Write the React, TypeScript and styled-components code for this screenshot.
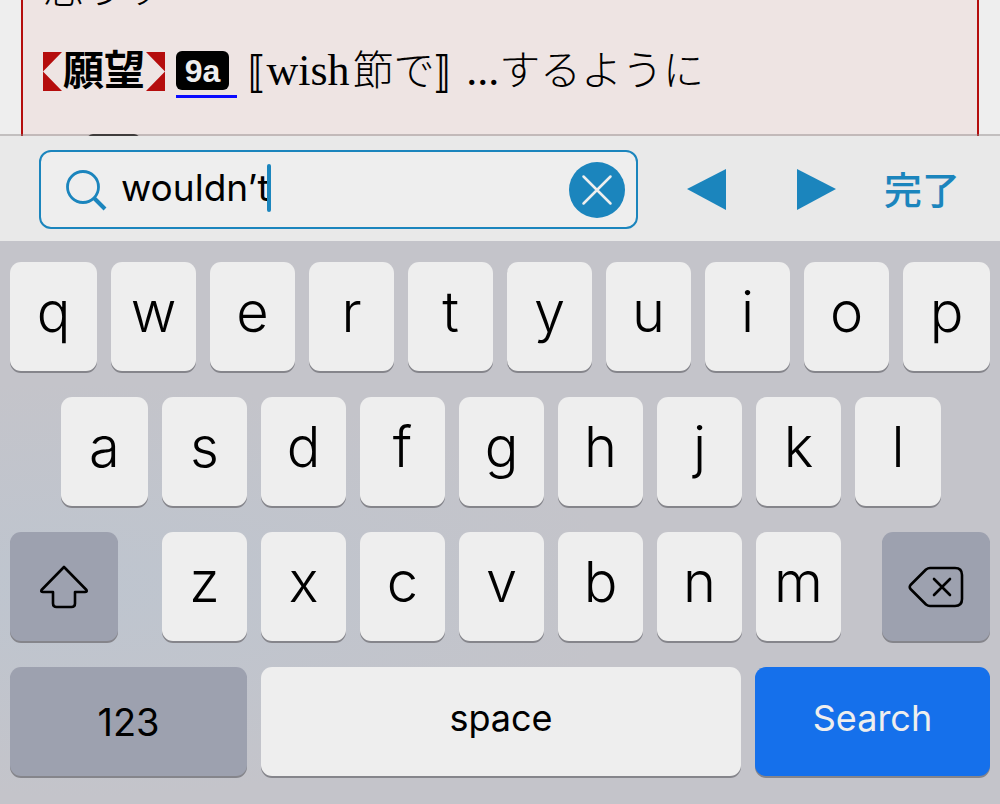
import React, { useState } from 'react';
import styled, { createGlobalStyle } from 'styled-components';

const accent = '#1b85bd';
const sans = 'Inter, "Noto Sans CJK JP", sans-serif';

const GlobalStyle = createGlobalStyle`
  *, *::before, *::after { box-sizing: border-box; }
  body { margin: 0; background: #eeeeee; }
  button { border: 0; padding: 0; background: none; font: inherit; cursor: pointer; }
`;

const Screen = styled.div`
  display: flex;
  flex-direction: column;
  height: 100vh;
  font-family: ${sans};
  color: #000;
`;

const Reader = styled.main`
  flex: 1 1 0;
  min-height: 0;
  overflow: hidden;
  padding: 0 21px;
  background: #eeeeee;
`;

const Entry = styled.article`
  display: flex;
  flex-direction: column;
  justify-content: center;
  height: 100%;
  padding: 6px 20px 0;
  border: solid #b50d0d;
  border-width: 0 2px;
  background: #eee4e3;
  font-family: "Liberation Serif", "Noto Sans CJK JP", serif;
  font-size: 41px;
  font-weight: 300;
  line-height: 82px;
  white-space: nowrap;
`;

const Line = styled.p<{ $indent?: number }>`
  display: flex;
  flex: none;
  align-items: center;
  height: 82px;
  margin: 0;
  padding-left: ${({ $indent = 0 }) => $indent}px;
`;

const Label = styled.strong`
  display: flex;
  align-items: center;
  margin-right: 11px;
  font-weight: 700;
`;

const Corner = styled.svg`
  width: 20px;
  height: 39px;
  fill: #b50d0d;
`;

const SenseLink = styled.a`
  display: flex;
  height: 47px;
  margin: 6px 6px 0 0;
  padding-right: 8px;
  border-bottom: 3px solid #0a0aff;
  text-decoration: none;
`;

const Badge = styled.span`
  width: 53px;
  height: 39px;
  border-radius: 6px;
  background: #000;
  color: #eee;
  font: 700 32px/41px "Liberation Sans", sans-serif;
  text-align: center;
`;

const Bracket = styled.span`
  font-family: "Noto Sans CJK JP", sans-serif;
  font-weight: 400;
  font-feature-settings: "halt";
`;

const Latin = styled.span<{ $gap?: number }>`
  padding: 0 ${({ $gap = 0 }) => $gap}px;
  font-size: 44px;
`;

const FindBar = styled.form`
  display: flex;
  flex: none;
  align-items: center;
  height: 107px;
  margin-top: -2px;
  padding: 2px 40px 0 39px;
  border-top: 2px solid #8c868673;
  background: #e9e9e9;
  background-clip: padding-box;
  color: ${accent};
`;

const SearchField = styled.div`
  display: flex;
  flex: 1;
  align-items: center;
  height: 79px;
  padding: 0 11px 0 24px;
  border: 2px solid ${accent};
  border-radius: 12px;
  background: #eeeeee;
`;

const SearchInputWrap = styled.label`
  position: relative;
  display: flex;
  flex: 1;
  min-width: 0;
  margin: 0 0 4px 12px;
`;

const SearchInput = styled.input`
  width: 100%;
  height: 60px;
  padding: 0;
  border: 0;
  outline: 0;
  background: transparent;
  color: #000;
  font: 400 37px/60px ${sans};
`;

const CaretTrack = styled.span`
  position: absolute;
  inset: 0;
  display: flex;
  align-items: center;
  pointer-events: none;
  font: 400 37px/60px ${sans};
`;

const Ghost = styled.span`
  margin-right: -3px;
  visibility: hidden;
`;

const Caret = styled.span`
  width: 4px;
  height: 48px;
  border-radius: 2px;
  background: ${accent};
`;

const IconButton = styled.button`
  display: flex;
  flex: none;
  color: inherit;
`;

const Steps = styled.div`
  display: flex;
  gap: 71px;
  margin: 0 48px 0 49px;
`;

const DoneButton = styled.button`
  flex: none;
  padding-bottom: 4px;
  color: inherit;
  font: 500 38px/56px "Noto Sans CJK JP", sans-serif;
`;

const Keyboard = styled.section`
  display: flex;
  flex: none;
  flex-direction: column;
  gap: 26px;
  padding: 21px 10px 28px;
  background:
    radial-gradient(ellipse at 8% 62%, #bec5cf 0%, #bec5cf00 42%),
    #c4c4ca;
`;

const KeyRow = styled.div<{ $left?: number; $right?: number }>`
  display: flex;
  gap: 14px;
  padding: 0 ${({ $right = 0 }) => $right}px 0 ${({ $left = 0 }) => $left}px;
`;

type Tone = 'light' | 'dark' | 'primary';
const tones: Record<Tone, string> = {
  light: 'background: #eeeeee; color: #000;',
  dark: 'background: #9da1af; color: #000;',
  primary: 'background: #1570eb; color: #eee;',
};

const Key = styled.button<{ $grow?: number; $tone?: Tone }>`
  display: flex;
  flex: ${({ $grow = 85 }) => $grow} 1 0;
  align-items: center;
  justify-content: center;
  min-width: 0;
  height: 109px;
  border-radius: 11px;
  box-shadow: 0 2px 0 #85858b;
  font-size: 38px;
  ${({ $tone = 'light' }) => tones[$tone]}
`;

const LetterKey = styled(Key)`
  padding-bottom: 10px;
  font-size: 56px;
  font-weight: 300;
`;

const WordKey = styled(Key)`
  padding-bottom: 8px;
  font-size: 36px;
`;

const Letters = styled.div`
  display: flex;
  flex: 679 1 0;
  gap: 14px;
  margin: 0 27px 0 30px;
`;

const widths: Record<string, number> = { q: 87, p: 87, a: 87, l: 86 };

function LetterKeys({ letters, onType }: { letters: string; onType: (c: string) => void }) {
  return (
    <>
      {letters.split('').map((c) => (
        <LetterKey key={c} type="button" $grow={widths[c]} onClick={() => onType(c)}>
          {c}
        </LetterKey>
      ))}
    </>
  );
}

function LabelMark({ children }: { children: React.ReactNode }) {
  return (
    <Label>
      <Corner viewBox="0 0 20 39" aria-hidden="true">
        <path d="M0 0H19L0 19.5L19 39H0Z" />
      </Corner>
      {children}
      <Corner viewBox="0 0 20 39" aria-hidden="true">
        <path d="M20 0H1L20 19.5L1 39H20Z" />
      </Corner>
    </Label>
  );
}

export default function App() {
  const [query, setQuery] = useState('wouldn’t');
  const type = (c: string) => setQuery((q) => q + c);

  return (
    <Screen>
      <GlobalStyle />
      <Reader>
        <Entry lang="ja">
          <Line>思うす</Line>
          <Line>
            <LabelMark>願望</LabelMark>
            <SenseLink href="#9a">
              <Badge>9a</Badge>
            </SenseLink>
            <Bracket>〚</Bracket>
            <Latin $gap={3}>wish</Latin>節で<Bracket>〛</Bracket>
            <Latin>&nbsp;...</Latin>するように
          </Line>
          <Line $indent={44}>
            <Badge aria-hidden="true" />
          </Line>
        </Entry>
      </Reader>

      <FindBar onSubmit={(e) => e.preventDefault()}>
        <SearchField>
          <svg width="44" height="44" viewBox="0 0 44 44" fill="none" stroke={accent} aria-hidden="true">
            <circle cx="18" cy="19" r="15.5" strokeWidth="2.8" />
            <path d="M29 30L40 41" strokeWidth="4" />
          </svg>
          <SearchInputWrap>
            <SearchInput aria-label="Find" value={query} onChange={(e) => setQuery(e.target.value)} />
            <CaretTrack aria-hidden="true">
              <Ghost>{query}</Ghost>
              <Caret />
            </CaretTrack>
          </SearchInputWrap>
          <IconButton type="button" aria-label="Clear" onClick={() => setQuery('')}>
            <svg width="56" height="56" viewBox="0 0 56 56">
              <circle cx="28" cy="28" r="28" fill={accent} />
              <path d="M14.5 14.5L41.5 41.5M41.5 14.5L14.5 41.5" stroke="#eee" strokeWidth="2.5" strokeLinecap="round" />
            </svg>
          </IconButton>
        </SearchField>
        <Steps>
          <IconButton type="button" aria-label="Previous">
            <svg width="39" height="41" viewBox="0 0 39 41" fill="currentColor">
              <path d="M39 0V41L0 20Z" />
            </svg>
          </IconButton>
          <IconButton type="button" aria-label="Next">
            <svg width="39" height="41" viewBox="0 0 39 41" fill="currentColor">
              <path d="M0 0V41L39 20Z" />
            </svg>
          </IconButton>
        </Steps>
        <DoneButton type="button">完了</DoneButton>
      </FindBar>

      <Keyboard aria-label="Keyboard">
        <KeyRow>
          <LetterKeys letters="qwertyuiop" onType={type} />
        </KeyRow>
        <KeyRow $left={51} $right={49}>
          <LetterKeys letters="asdfghjkl" onType={type} />
        </KeyRow>
        <KeyRow>
          <Key type="button" $grow={108} $tone="dark" aria-label="Shift">
            <svg width="50" height="46" viewBox="0 0 50 46" fill="none" stroke="#000" strokeWidth="2.6" strokeLinejoin="round">
              <path d="M25 3L47.5 26Q48.500 28 46 28H36V39.500Q36 43 32.500 43H17.500Q14 43 14 39.500V28H4Q1.500 28 2.500 26Z" />
            </svg>
          </Key>
          <Letters>
            <LetterKeys letters="zxcvbnm" onType={type} />
          </Letters>
          <Key type="button" $grow={108} $tone="dark" aria-label="Delete" onClick={() => setQuery((q) => q.slice(0, -1))}>
            <svg width="56" height="42" viewBox="0 0 56 42" fill="none" stroke="#000" strokeWidth="2.6" strokeLinecap="round" strokeLinejoin="round">
              <path d="M18 3.500Q20 2 22 2H47Q54 2 54 9V33Q54 40 47 40H22Q20 40 18 38.500L2.500 23Q1 21 2.500 19Z" />
              <path d="M26 13L42 29M42 13L26 29" />
            </svg>
          </Key>
        </KeyRow>
        <KeyRow>
          <Key type="button" $grow={237} $tone="dark">123</Key>
          <WordKey type="button" $grow={480} onClick={() => type(' ')}>space</WordKey>
          <WordKey type="button" $grow={235} $tone="primary">Search</WordKey>
        </KeyRow>
      </Keyboard>
    </Screen>
  );
}
